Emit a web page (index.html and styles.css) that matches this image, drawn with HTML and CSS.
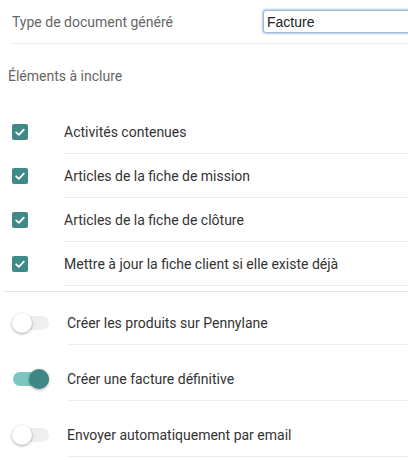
FILE: index.html
```html
<!DOCTYPE html>
<html lang="fr">
<head>
<meta charset="utf-8">
<link rel="stylesheet" href="styles.css">
</head>
<body>
<div class="page">
  <div class="type-row">
    <span class="label">Type de document généré</span>
    <input class="type-input" type="text" value="Facture">
  </div>
  <div class="section-title">Éléments à inclure</div>
  <div class="checks">
    <div class="check-row">
      <span class="checkbox"><svg viewBox="0 0 16 16" width="16" height="16"><path d="M4.2 8.3 L6.8 10.8 L11.8 5.6" fill="none" stroke="#fff" stroke-width="1.8" stroke-linecap="round" stroke-linejoin="round"/></svg></span>
      <span class="check-text">Activités contenues</span>
    </div>
    <div class="check-row">
      <span class="checkbox"><svg viewBox="0 0 16 16" width="16" height="16"><path d="M4.2 8.3 L6.8 10.8 L11.8 5.6" fill="none" stroke="#fff" stroke-width="1.8" stroke-linecap="round" stroke-linejoin="round"/></svg></span>
      <span class="check-text">Articles de la fiche de mission</span>
    </div>
    <div class="check-row">
      <span class="checkbox"><svg viewBox="0 0 16 16" width="16" height="16"><path d="M4.2 8.3 L6.8 10.8 L11.8 5.6" fill="none" stroke="#fff" stroke-width="1.8" stroke-linecap="round" stroke-linejoin="round"/></svg></span>
      <span class="check-text">Articles de la fiche de clôture</span>
    </div>
    <div class="check-row">
      <span class="checkbox"><svg viewBox="0 0 16 16" width="16" height="16"><path d="M4.2 8.3 L6.8 10.8 L11.8 5.6" fill="none" stroke="#fff" stroke-width="1.8" stroke-linecap="round" stroke-linejoin="round"/></svg></span>
      <span class="check-text">Mettre à jour la fiche client si elle existe déjà</span>
    </div>
  </div>
  <div class="sep"></div>
  <div class="toggles">
    <div class="toggle-row">
      <span class="switch"><span class="track"></span><span class="knob"></span></span>
      <span class="toggle-text">Créer les produits sur Pennylane</span>
    </div>
    <div class="toggle-row">
      <span class="switch on"><span class="track"></span><span class="knob"></span></span>
      <span class="toggle-text">Créer une facture définitive</span>
    </div>
    <div class="toggle-row">
      <span class="switch"><span class="track"></span><span class="knob"></span></span>
      <span class="toggle-text">Envoyer automatiquement par email</span>
    </div>
  </div>
</div>
</body>
</html>
```

FILE: styles.css
```css
html, body {
  margin: 0;
  padding: 0;
  background: #fff;
}
body {
  font-family: Roboto, "Liberation Sans", Arial, sans-serif;
  font-size: 14px;
  color: #333;
  overflow: hidden;
}
.page {
  width: 408px;
}
.type-row {
  display: flex;
  align-items: center;
  margin-left: 11px;
  border-bottom: 1px solid #eeeeee;
  box-sizing: border-box;
  height: 44px;
}
.label {
  color: #666;
  padding-left: 1px;
  width: 251px;
  flex: none;
  margin-top: 1px;
}
.type-input {
  flex: none;
  width: 160px;
  height: 23px;
  box-sizing: border-box;
  margin: 0;
  padding: 0 0 0 3px;
  border: 1px solid #a9b8c9;
  border-radius: 3px;
  box-shadow: 0 0 2px 1px rgba(110, 160, 230, 0.55);
  font-family: "Liberation Sans", Arial, sans-serif;
  font-size: 14px;
  color: #222;
  outline: none;
}
.section-title {
  color: #666;
  padding-left: 8px;
  height: 20px;
  line-height: 20px;
  margin-top: 22px;
}
.checks {
  margin-top: 24px;
}
.check-row {
  display: flex;
  align-items: stretch;
  height: 44px;
  padding-left: 12px;
}
.checkbox {
  flex: none;
  width: 16px;
  height: 16px;
  margin-top: 14px;
  margin-right: 36px;
  border-radius: 2px;
  background: #3e8a87;
  display: block;
}
.checkbox svg {
  display: block;
}
.check-text {
  flex: 1;
  display: flex;
  align-items: center;
  border-bottom: 1px solid #eeeeee;
  padding-bottom: 0;
  box-sizing: border-box;
}
.sep {
  margin-top: 5px;
  margin-left: 3px;
  border-top: 1px solid #e6e6e6;
}
.toggle-row {
  display: flex;
  align-items: stretch;
  height: 56px;
  padding-left: 12px;
}
.toggle-row:first-child {
  height: 53px;
}
.switch {
  flex: none;
  position: relative;
  width: 37px;
  height: 20px;
  margin-top: 24px;
  margin-right: 18px;
}
.toggle-row:first-child .switch {
  margin-top: 21px;
}
.track {
  position: absolute;
  left: 1px;
  top: 3px;
  width: 36px;
  height: 14px;
  border-radius: 7px;
  background: #efefef;
}
.knob {
  position: absolute;
  left: 0;
  top: 0;
  width: 20px;
  height: 20px;
  border-radius: 50%;
  background: #fff;
  box-shadow: 0 1px 3px rgba(0, 0, 0, 0.35);
}
.switch.on .track {
  background: #7cc5c1;
}
.switch.on .knob {
  left: 17px;
  background: #3e8785;
}
.toggle-text {
  flex: 1;
  display: flex;
  align-items: flex-start;
  padding-top: 24px;
  line-height: 20px;
  border-bottom: 1px solid #eeeeee;
  box-sizing: border-box;
}
.toggle-row:first-child .toggle-text {
  padding-top: 21px;
}
```
